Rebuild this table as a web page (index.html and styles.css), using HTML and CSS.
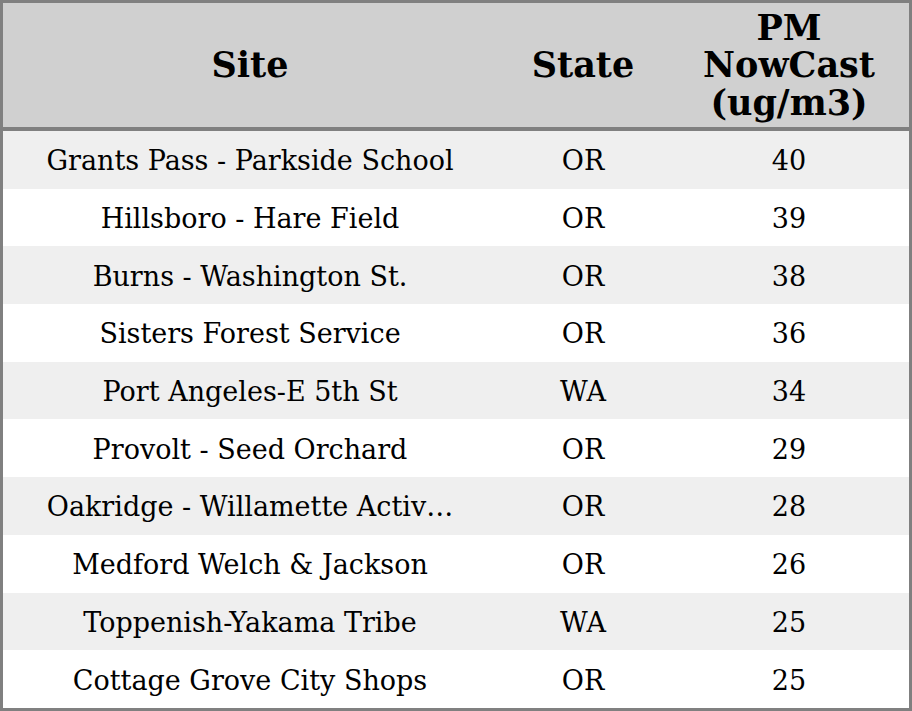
FILE: index.html
```html
<!DOCTYPE html>
<html>
<head>
<meta charset="utf-8">
<link rel="stylesheet" href="styles.css">
</head>
<body>
<table class="aq">
  <colgroup>
    <col class="c-site">
    <col class="c-state">
    <col class="c-pm">
  </colgroup>
  <thead>
    <tr>
      <th>Site</th>
      <th>State</th>
      <th>PM<br>NowCast<br>(ug/m3)</th>
    </tr>
  </thead>
  <tbody>
    <tr><td>Grants Pass - Parkside School</td><td>OR</td><td>40</td></tr>
    <tr><td>Hillsboro - Hare Field</td><td>OR</td><td>39</td></tr>
    <tr><td>Burns - Washington St.</td><td>OR</td><td>38</td></tr>
    <tr><td>Sisters Forest Service</td><td>OR</td><td>36</td></tr>
    <tr><td>Port Angeles-E 5th St</td><td>WA</td><td>34</td></tr>
    <tr><td>Provolt - Seed Orchard</td><td>OR</td><td>29</td></tr>
    <tr><td>Oakridge - Willamette Activ…</td><td>OR</td><td>28</td></tr>
    <tr><td>Medford Welch &amp; Jackson</td><td>OR</td><td>26</td></tr>
    <tr><td>Toppenish-Yakama Tribe</td><td>WA</td><td>25</td></tr>
    <tr><td>Cottage Grove City Shops</td><td>OR</td><td>25</td></tr>
  </tbody>
</table>
</body>
</html>
```
FILE: styles.css
```css
html, body {
  margin: 0;
  padding: 0;
  background: #ffffff;
}
.aq {
  width: 912px;
  height: 711px;
  border-collapse: separate;
  border-spacing: 0;
  border: 3px solid #808080;
  box-sizing: border-box;
  table-layout: fixed;
  font-family: "DejaVu Serif", serif;
  color: #000;
}
.c-site { width: 494px; }
.c-state { width: 172px; }
.c-pm { width: 240px; }
.aq th {
  background: #d0d0d0;
  font-weight: bold;
  font-size: 35px;
  line-height: 37.5px;
  height: 124px;
  padding: 0;
  text-align: center;
  vertical-align: middle;
  border-bottom: 4px solid #808080;
}
.aq td {
  font-size: 27px;
  height: 55.7px;
  padding: 2px 0 0;
  text-align: center;
  vertical-align: middle;
  white-space: nowrap;
}
.aq tbody tr:nth-child(odd) td {
  background: #efefef;
}
```
